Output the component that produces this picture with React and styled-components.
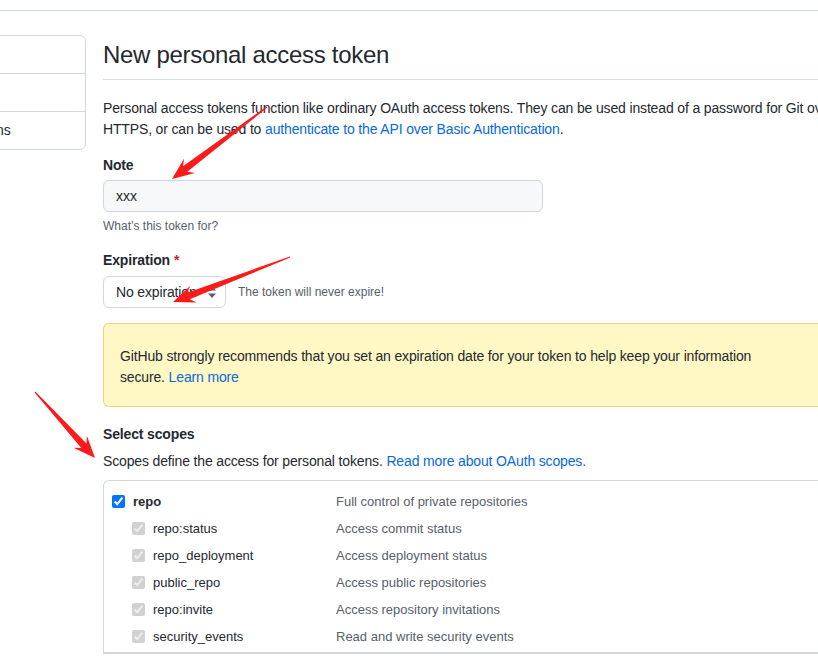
import React from 'react';
import styled, { createGlobalStyle } from 'styled-components';

const GlobalStyle = createGlobalStyle`
  html, body {
    margin: 0;
    padding: 0;
    overflow: hidden;
    background: #ffffff;
  }
  body {
    font-family: 'Liberation Sans', 'Noto Sans', Arial, sans-serif;
    font-size: 14px;
    line-height: 1.5;
    letter-spacing: -0.15px;
    color: #24292f;
  }
`;

const Page = styled.div`
  position: relative;
  width: 818px;
  height: 657px;
  overflow: hidden;
`;

const TopBar = styled.div`
  height: 10px;
  border-bottom: 1px solid #d0d7de;
`;

const Layout = styled.div`
  display: flex;
  gap: 17px;
  padding-top: 24px;
`;

const SideNav = styled.nav`
  box-sizing: border-box;
  flex-shrink: 0;
  align-self: flex-start;
  width: 230px;
  margin-left: -144px;
  border: 1px solid #d0d7de;
  border-radius: 6px;
  overflow: hidden;
`;

const NavItem = styled.div`
  height: 37px;
  padding-left: 9px;
  display: flex;
  align-items: center;
  color: #24292f;
  & + & {
    border-top: 1px solid #d0d7de;
  }
`;

const Main = styled.main`
  flex-shrink: 0;
  width: 760px;
  padding-top: 2px;
`;

const Subhead = styled.h1`
  margin: 0;
  padding-bottom: 6px;
  border-bottom: 1px solid #d8dee4;
  font-size: 24px;
  font-weight: 400;
  line-height: 36px;
  letter-spacing: -0.3px;
`;

const Intro = styled.p`
  margin: 18px 0 0;
  line-height: 21px;
`;

const Link = styled.a`
  color: #0969da;
  text-decoration: none;
`;

const FormGroup = styled.div`
  margin-top: ${(p) => p.$gap || 15}px;
`;

const Label = styled.div`
  font-weight: 600;
  line-height: 21px;
`;

const Required = styled.span`
  color: #cf222e;
  margin-left: 4px;
`;

const TextInput = styled.input`
  display: block;
  box-sizing: border-box;
  width: 440px;
  height: 32px;
  margin-top: 4px;
  padding: 0 12px;
  border: 1px solid #d0d7de;
  border-radius: 6px;
  background: #f6f8fa;
  font-family: inherit;
  font-size: 14px;
  color: #24292f;
  outline: none;
`;

const Note = styled.div`
  margin-top: 5px;
  font-size: 12px;
  line-height: 18px;
  letter-spacing: 0;
  color: #57606a;
`;

const SelectRow = styled.div`
  display: flex;
  align-items: center;
  gap: 12px;
  margin-top: 5px;
`;

const SelectBox = styled.div`
  box-sizing: border-box;
  width: 123px;
  height: 32px;
  padding: 0 8px 0 12px;
  display: flex;
  align-items: center;
  justify-content: space-between;
  border: 1px solid #d0d7de;
  border-radius: 6px;
  background: #ffffff;
  white-space: nowrap;
  overflow: hidden;
`;

const SelectHint = styled.span`
  font-size: 12px;
  letter-spacing: 0;
  color: #57606a;
`;

const Flash = styled.div`
  margin-top: 15px;
  padding: 22px 16px 18px;
  border: 1px solid rgba(212, 167, 44, 0.45);
  border-radius: 6px;
  background: #fff8c5;
  line-height: 21px;
`;

const FlashText = styled.div`
  max-width: 660px;
`;

const ScopeHelp = styled.div`
  margin-top: 6px;
  line-height: 21px;
`;

const ScopeBox = styled.div`
  margin-top: 8px;
  border: 1px solid #d0d7de;
  border-right: none;
  border-radius: 6px 0 0 0;
  font-size: 13px;
  letter-spacing: 0;
`;

const ScopeGroup = styled.div`
  padding: 7px 0 2px;
  border-bottom: 1px solid #d0d7de;
`;

const ScopeRow = styled.div`
  display: grid;
  grid-template-columns: 232px 1fr;
  height: 27px;
  align-items: center;
`;

const ScopeName = styled.label`
  display: flex;
  align-items: center;
  gap: 8px;
  padding-left: ${(p) => (p.$child ? 28 : 8)}px;
  font-weight: ${(p) => (p.$child ? 400 : 600)};
  color: #24292f;
`;

const Check = styled.input`
  margin: 0;
  width: 13px;
  height: 13px;
`;

const ScopeDesc = styled.span`
  color: #57606a;
`;

const Overlay = styled.svg`
  position: absolute;
  left: 0;
  top: 0;
  pointer-events: none;
`;

const SortIcon = () => (
  <svg width="10" height="14" viewBox="0 0 10 14">
    <path d="M5 1 L9 5.5 H1 Z" fill="#57606a" />
    <path d="M5 13 L9 8.5 H1 Z" fill="#57606a" />
  </svg>
);

// tapered red annotation arrow, tail -> tip
function arrowPoints(tail, tip, head = 22, headW = 9, neckW = 3.5) {
  const dx = tip[0] - tail[0];
  const dy = tip[1] - tail[1];
  const len = Math.hypot(dx, dy);
  const ux = dx / len;
  const uy = dy / len;
  const nx = -uy;
  const ny = ux;
  const at = (d, w) => [tip[0] - ux * d + nx * w, tip[1] - uy * d + ny * w];
  const pts = [
    at(len, 0.6),
    at(head * 0.75, neckW),
    at(head, headW),
    tip,
    at(head, -headW),
    at(head * 0.75, -neckW),
    at(len, -0.6),
  ];
  return pts.map((p) => p.map((v) => v.toFixed(1)).join(',')).join(' ');
}

const arrows = [
  { tail: [267, 107], tip: [172, 179] },
  { tail: [290, 257], tip: [173, 302] },
  { tail: [35, 392], tip: [95, 458] },
];

const scopes = [
  ['repo:status', 'Access commit status'],
  ['repo_deployment', 'Access deployment status'],
  ['public_repo', 'Access public repositories'],
  ['repo:invite', 'Access repository invitations'],
  ['security_events', 'Read and write security events'],
];

export default function App() {
  return (
    <Page>
      <GlobalStyle />
      <TopBar />
      <Layout>
        <SideNav>
          <NavItem>GitHub Apps</NavItem>
          <NavItem>OAuth Apps</NavItem>
          <NavItem>Personal access tokens</NavItem>
        </SideNav>
        <Main>
          <Subhead>New personal access token</Subhead>
          <Intro>
            Personal access tokens function like ordinary OAuth access tokens. They can be used
            instead of a password for Git over HTTPS, or can be used to{' '}
            <Link>authenticate to the API over Basic Authentication</Link>.
          </Intro>

          <FormGroup>
            <Label>Note</Label>
            <TextInput defaultValue="xxx" readOnly />
            <Note>What’s this token for?</Note>
          </FormGroup>

          <FormGroup>
            <Label>
              Expiration<Required>*</Required>
            </Label>
            <SelectRow>
              <SelectBox>
                <span>No expiration</span>
                <SortIcon />
              </SelectBox>
              <SelectHint>The token will never expire!</SelectHint>
            </SelectRow>
          </FormGroup>

          <Flash>
            <FlashText>
              GitHub strongly recommends that you set an expiration date for your token to help
              keep your information secure. <Link>Learn more</Link>
            </FlashText>
          </Flash>

          <FormGroup $gap={17}>
            <Label>Select scopes</Label>
            <ScopeHelp>
              Scopes define the access for personal tokens.{' '}
              <Link>Read more about OAuth scopes.</Link>
            </ScopeHelp>
            <ScopeBox>
              <ScopeGroup>
                <ScopeRow>
                  <ScopeName>
                    <Check type="checkbox" defaultChecked />
                    repo
                  </ScopeName>
                  <ScopeDesc>Full control of private repositories</ScopeDesc>
                </ScopeRow>
                {scopes.map(([name, desc]) => (
                  <ScopeRow key={name}>
                    <ScopeName $child>
                      <Check type="checkbox" defaultChecked disabled />
                      {name}
                    </ScopeName>
                    <ScopeDesc>{desc}</ScopeDesc>
                  </ScopeRow>
                ))}
              </ScopeGroup>
            </ScopeBox>
          </FormGroup>
        </Main>
      </Layout>

      <Overlay width="818" height="657">
        {arrows.map((a, i) => (
          <polygon key={i} points={arrowPoints(a.tail, a.tip)} fill="#ff1a1a" />
        ))}
      </Overlay>
    </Page>
  );
}
